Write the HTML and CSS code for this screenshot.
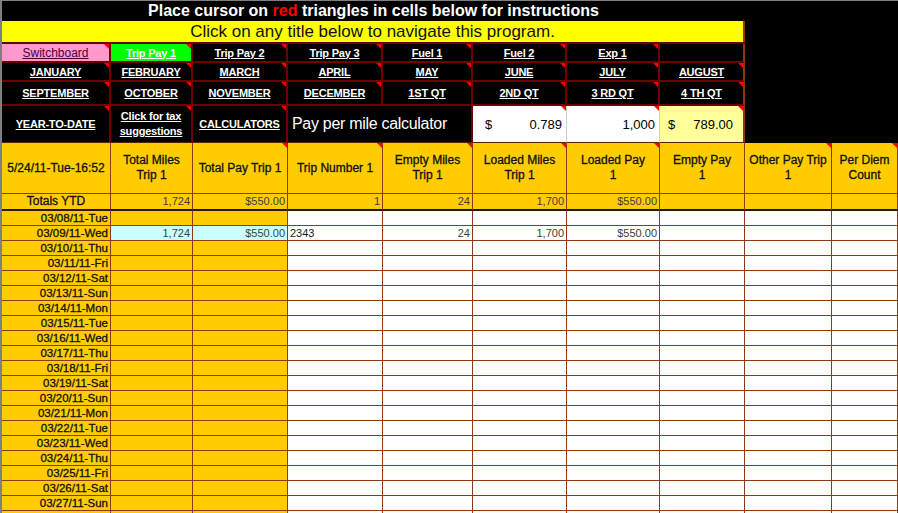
FILE: index.html
```html
<!DOCTYPE html>
<html lang="en">
<head>
  <meta charset="UTF-8" />
  <title>Trip Pay 1</title>
  <link rel="stylesheet" href="styles.css">
</head>
<body>
<div class="sheet">

  <!-- Top banner and navigation -->
  <div class="top">
    <div class="banner">
      <div class="title">Place cursor on <span class="red">red</span> triangles in cells below for instructions</div>
      <div class="notice">Click on any title below to navigate this program.</div>

      <div class="nav">
        <div class="cell pink tri"><span class="link dark">Switchboard</span></div>
        <div class="cell green tri"><span class="link">Trip Pay 1</span></div>
        <div class="cell tri"><span class="link">Trip Pay 2</span></div>
        <div class="cell tri"><span class="link">Trip Pay 3</span></div>
        <div class="cell tri"><span class="link">Fuel 1</span></div>
        <div class="cell tri"><span class="link">Fuel 2</span></div>
        <div class="cell tri"><span class="link">Exp 1</span></div>
        <div class="cell last"></div>

        <div class="cell tri"><span class="link">JANUARY</span></div>
        <div class="cell tri"><span class="link">FEBRUARY</span></div>
        <div class="cell tri"><span class="link">MARCH</span></div>
        <div class="cell tri"><span class="link">APRIL</span></div>
        <div class="cell tri"><span class="link">MAY</span></div>
        <div class="cell tri"><span class="link">JUNE</span></div>
        <div class="cell tri"><span class="link">JULY</span></div>
        <div class="cell last tri"><span class="link">AUGUST</span></div>

        <div class="cell tri"><span class="link">SEPTEMBER</span></div>
        <div class="cell tri"><span class="link">OCTOBER</span></div>
        <div class="cell tri"><span class="link">NOVEMBER</span></div>
        <div class="cell tri"><span class="link">DECEMBER</span></div>
        <div class="cell tri"><span class="link">1ST QT</span></div>
        <div class="cell tri"><span class="link">2ND QT</span></div>
        <div class="cell tri"><span class="link">3 RD QT</span></div>
        <div class="cell last tri"><span class="link">4 TH QT</span></div>

        <div class="cell ytd tri"><span class="link">YEAR-TO-DATE</span></div>
        <div class="cell ytd tri"><span class="link two">Click for tax<br>suggestions</span></div>
        <div class="cell ytd tri"><span class="link">CALCULATORS</span></div>
        <div class="cell ytd calc-label">Pay per mile calculator</div>
        <div class="cell ytd calc white tri"><span>$</span><span>0.789</span></div>
        <div class="cell ytd calc white tri"><span></span><span>1,000</span></div>
        <div class="cell ytd calc lemon last tri"><span>$</span><span>789.00</span></div>
      </div>
    </div>
  </div>

  <!-- Column headers -->
  <div class="row hdr">
    <div class="c">5/24/11-Tue-16:52</div>
    <div class="c">Total Miles<br>Trip 1</div>
    <div class="c tri">Total Pay Trip 1</div>
    <div class="c tri">Trip Number 1</div>
    <div class="c tri">Empty Miles<br>Trip 1</div>
    <div class="c tri">Loaded Miles<br>Trip 1</div>
    <div class="c tri">Loaded Pay<br>1</div>
    <div class="c">Empty Pay<br>1</div>
    <div class="c tri">Other Pay Trip<br>1</div>
    <div class="c tri">Per Diem<br>Count</div>
  </div>

  <div class="row totals">
    <div class="c label">Totals YTD</div>
    <div class="c num">1,724</div>
    <div class="c num">$550.00</div>
    <div class="c num">1</div>
    <div class="c num">24</div>
    <div class="c num">1,700</div>
    <div class="c num">$550.00</div>
    <div class="c"></div>
    <div class="c"></div>
    <div class="c"></div>
  </div>

  <!-- Daily rows -->
  <div class="row day">
    <div class="c date">03/08/11-Tue</div><div class="c gold"></div><div class="c gold"></div>
    <div class="c"></div><div class="c"></div><div class="c"></div><div class="c"></div><div class="c"></div><div class="c"></div><div class="c"></div>
  </div>
  <div class="row day">
    <div class="c date">03/09/11-Wed</div><div class="c cyan num">1,724</div><div class="c cyan num">$550.00</div>
    <div class="c txt">2343</div><div class="c num">24</div><div class="c num">1,700</div><div class="c num">$550.00</div><div class="c"></div><div class="c"></div><div class="c"></div>
  </div>
  <div class="row day">
    <div class="c date">03/10/11-Thu</div><div class="c gold"></div><div class="c gold"></div>
    <div class="c"></div><div class="c"></div><div class="c"></div><div class="c"></div><div class="c"></div><div class="c"></div><div class="c"></div>
  </div>
  <div class="row day">
    <div class="c date">03/11/11-Fri</div><div class="c gold"></div><div class="c gold"></div>
    <div class="c"></div><div class="c"></div><div class="c"></div><div class="c"></div><div class="c"></div><div class="c"></div><div class="c"></div>
  </div>
  <div class="row day">
    <div class="c date">03/12/11-Sat</div><div class="c gold"></div><div class="c gold"></div>
    <div class="c"></div><div class="c"></div><div class="c"></div><div class="c"></div><div class="c"></div><div class="c"></div><div class="c"></div>
  </div>
  <div class="row day">
    <div class="c date">03/13/11-Sun</div><div class="c gold"></div><div class="c gold"></div>
    <div class="c"></div><div class="c"></div><div class="c"></div><div class="c"></div><div class="c"></div><div class="c"></div><div class="c"></div>
  </div>
  <div class="row day">
    <div class="c date">03/14/11-Mon</div><div class="c gold"></div><div class="c gold"></div>
    <div class="c"></div><div class="c"></div><div class="c"></div><div class="c"></div><div class="c"></div><div class="c"></div><div class="c"></div>
  </div>
  <div class="row day">
    <div class="c date">03/15/11-Tue</div><div class="c gold"></div><div class="c gold"></div>
    <div class="c"></div><div class="c"></div><div class="c"></div><div class="c"></div><div class="c"></div><div class="c"></div><div class="c"></div>
  </div>
  <div class="row day">
    <div class="c date">03/16/11-Wed</div><div class="c gold"></div><div class="c gold"></div>
    <div class="c"></div><div class="c"></div><div class="c"></div><div class="c"></div><div class="c"></div><div class="c"></div><div class="c"></div>
  </div>
  <div class="row day">
    <div class="c date">03/17/11-Thu</div><div class="c gold"></div><div class="c gold"></div>
    <div class="c"></div><div class="c"></div><div class="c"></div><div class="c"></div><div class="c"></div><div class="c"></div><div class="c"></div>
  </div>
  <div class="row day">
    <div class="c date">03/18/11-Fri</div><div class="c gold"></div><div class="c gold"></div>
    <div class="c"></div><div class="c"></div><div class="c"></div><div class="c"></div><div class="c"></div><div class="c"></div><div class="c"></div>
  </div>
  <div class="row day">
    <div class="c date">03/19/11-Sat</div><div class="c gold"></div><div class="c gold"></div>
    <div class="c"></div><div class="c"></div><div class="c"></div><div class="c"></div><div class="c"></div><div class="c"></div><div class="c"></div>
  </div>
  <div class="row day">
    <div class="c date">03/20/11-Sun</div><div class="c gold"></div><div class="c gold"></div>
    <div class="c"></div><div class="c"></div><div class="c"></div><div class="c"></div><div class="c"></div><div class="c"></div><div class="c"></div>
  </div>
  <div class="row day">
    <div class="c date">03/21/11-Mon</div><div class="c gold"></div><div class="c gold"></div>
    <div class="c"></div><div class="c"></div><div class="c"></div><div class="c"></div><div class="c"></div><div class="c"></div><div class="c"></div>
  </div>
  <div class="row day">
    <div class="c date">03/22/11-Tue</div><div class="c gold"></div><div class="c gold"></div>
    <div class="c"></div><div class="c"></div><div class="c"></div><div class="c"></div><div class="c"></div><div class="c"></div><div class="c"></div>
  </div>
  <div class="row day">
    <div class="c date">03/23/11-Wed</div><div class="c gold"></div><div class="c gold"></div>
    <div class="c"></div><div class="c"></div><div class="c"></div><div class="c"></div><div class="c"></div><div class="c"></div><div class="c"></div>
  </div>
  <div class="row day">
    <div class="c date">03/24/11-Thu</div><div class="c gold"></div><div class="c gold"></div>
    <div class="c"></div><div class="c"></div><div class="c"></div><div class="c"></div><div class="c"></div><div class="c"></div><div class="c"></div>
  </div>
  <div class="row day">
    <div class="c date">03/25/11-Fri</div><div class="c gold"></div><div class="c gold"></div>
    <div class="c"></div><div class="c"></div><div class="c"></div><div class="c"></div><div class="c"></div><div class="c"></div><div class="c"></div>
  </div>
  <div class="row day">
    <div class="c date">03/26/11-Sat</div><div class="c gold"></div><div class="c gold"></div>
    <div class="c"></div><div class="c"></div><div class="c"></div><div class="c"></div><div class="c"></div><div class="c"></div><div class="c"></div>
  </div>
  <div class="row day">
    <div class="c date">03/27/11-Sun</div><div class="c gold"></div><div class="c gold"></div>
    <div class="c"></div><div class="c"></div><div class="c"></div><div class="c"></div><div class="c"></div><div class="c"></div><div class="c"></div>
  </div>
  <div class="row day">
    <div class="c date"></div><div class="c gold"></div><div class="c gold"></div>
    <div class="c"></div><div class="c"></div><div class="c"></div><div class="c"></div><div class="c"></div><div class="c"></div><div class="c"></div>
  </div>

</div>
</body>
</html>
```

FILE: styles.css
```css
body {
  margin: 0;
  font-family: 'Liberation Sans', Arial, sans-serif;
  background: #fff;
  overflow: hidden;
}

.sheet {
  width: 896px;
  height: 512px;
  overflow: hidden;
  border-left: 2px solid #7f7f7f;
  border-top: 1px solid #7f7f7f;
}

/* Banner */
.top {
  background: #000;
}

.banner {
  width: 743px;
}

.title {
  height: 20px;
  line-height: 20px;
  text-align: center;
  color: #fff;
  font-weight: bold;
  font-size: 16px;
}

.title .red {
  color: #ff0000;
}

.notice {
  height: 21px;
  line-height: 21px;
  box-sizing: border-box;
  background: #ffff00;
  border-right: 2px solid #8b3a12;
  text-align: center;
  font-size: 17px;
  color: #111;
}

/* Navigation grid */
.nav {
  display: grid;
  grid-template-columns: 109px 82px 95px 95px 90px 94px 93px 85px;
  grid-template-rows: 19px 19px 24px 37px;
  border-top: 2px solid #6e0000;
}

.nav .cell {
  position: relative;
  box-sizing: border-box;
  border-right: 2px solid #6e0000;
  border-bottom: 2px solid #6e0000;
  display: flex;
  align-items: center;
  justify-content: center;
  background: #000;
}

.nav .last {
  border-right-color: #8b3a12;
}

.link {
  color: #fff;
  font-weight: bold;
  font-size: 11px;
  letter-spacing: -0.2px;
  text-decoration: underline;
  white-space: nowrap;
}

.link.two {
  text-align: center;
  line-height: 15px;
}

.link.dark {
  color: #4a0038;
  font-weight: normal;
  font-size: 12px;
  letter-spacing: 0;
}

.nav .pink {
  background: #ff99cc;
}

.nav .green {
  background: #00ff00;
}

.nav .ytd {
  border-bottom: 1px solid #5a1e00;
}

.nav .calc-label {
  grid-column: span 2;
  justify-content: flex-start;
  padding-left: 4px;
  color: #fff;
  font-size: 16px;
  letter-spacing: -0.3px;
  white-space: nowrap;
}

.nav .calc {
  justify-content: space-between;
  padding: 0 4px 0 12px;
  font-size: 13px;
  color: #000;
}

.nav .white {
  background: #fff;
  border-right: 1px solid #d0d0d0;
}

.nav .lemon {
  background: #ffff99;
  padding-left: 8px;
  padding-right: 10px;
  border-right: 2px solid #8b3a12;
}

/* red comment triangles */
.tri::after {
  content: '';
  position: absolute;
  top: 0;
  right: 0;
  border-left: 5px solid transparent;
  border-top: 5px solid #ff0000;
}

/* Data grid */
.row {
  display: grid;
  grid-template-columns: 109px 82px 95px 95px 90px 94px 93px 85px 87px 66px;
}

.row .c {
  position: relative;
  box-sizing: border-box;
  border-right: 1px solid #8b3a12;
  border-bottom: 1px solid #8b3a12;
  font-size: 11px;
  color: #1a1a1a;
  white-space: nowrap;
  overflow: hidden;
}

.hdr {
  height: 51px;
  background: #ffcc00;
}

.hdr .c {
  display: flex;
  align-items: center;
  justify-content: center;
  text-align: center;
  font-size: 12px;
  line-height: 15px;
  color: #111;
  -webkit-text-stroke: 0.3px #111;
}

.totals {
  height: 17px;
  background: #ffcc00;
}

.totals .c {
  line-height: 15px;
  border-bottom: 2px solid #2b1400;
}

.totals .label {
  text-align: center;
  font-size: 12px;
  color: #111;
  -webkit-text-stroke: 0.3px #111;
}

.num {
  text-align: right;
  padding-right: 2px;
  color: #404040 !important;
}

.txt {
  padding-left: 2px;
}

.day {
  height: 15px;
  background: #fff;
}

.day .c {
  line-height: 14px;
}

.day .date {
  background: #ffcc00;
  text-align: right;
  padding-right: 2px;
  font-size: 11.5px;
  color: #111;
  -webkit-text-stroke: 0.3px #111;
}

.day .gold {
  background: #ffcc00;
}

.day .cyan {
  background: #ccffff;
}
```
